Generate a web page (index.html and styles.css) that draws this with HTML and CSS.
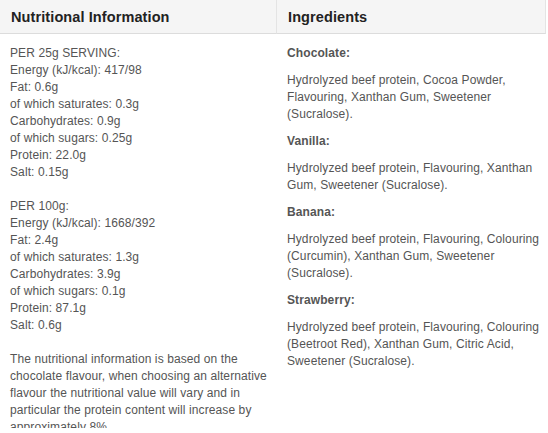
FILE: index.html
```html
<!DOCTYPE html>
<html>
<head>
<meta charset="utf-8">
<link rel="stylesheet" href="styles.css">
</head>
<body>
<div class="wrap">
  <section class="col col-left">
    <h2 class="head">Nutritional Information</h2>
    <div class="body">
      <p>PER 25g SERVING:<br>Energy (kJ/kcal): 417/98<br>Fat: 0.6g<br>of which saturates: 0.3g<br>Carbohydrates: 0.9g<br>of which sugars: 0.25g<br>Protein: 22.0g<br>Salt: 0.15g</p>
      <p>PER 100g:<br>Energy (kJ/kcal): 1668/392<br>Fat: 2.4g<br>of which saturates: 1.3g<br>Carbohydrates: 3.9g<br>of which sugars: 0.1g<br>Protein: 87.1g<br>Salt: 0.6g</p>
      <p>The nutritional information is based on the chocolate flavour, when choosing an alternative flavour the nutritional value will vary and in particular the protein content will increase by approximately 8%.</p>
    </div>
  </section>
  <section class="col col-right">
    <h2 class="head">Ingredients</h2>
    <div class="body">
      <h3 class="flav">Chocolate:</h3>
      <p class="ing">Hydrolyzed beef protein, Cocoa Powder, Flavouring, Xanthan Gum, Sweetener (Sucralose).</p>
      <h3 class="flav">Vanilla:</h3>
      <p class="ing">Hydrolyzed beef protein, Flavouring, Xanthan Gum, Sweetener (Sucralose).</p>
      <h3 class="flav">Banana:</h3>
      <p class="ing">Hydrolyzed beef protein, Flavouring, Colouring (Curcumin), Xanthan Gum, Sweetener (Sucralose).</p>
      <h3 class="flav">Strawberry:</h3>
      <p class="ing">Hydrolyzed beef protein, Flavouring, Colouring (Beetroot Red), Xanthan Gum, Citric Acid, Sweetener (Sucralose).</p>
    </div>
  </section>
</div>
</body>
</html>
```
FILE: styles.css
```css
html, body {
  margin: 0;
  padding: 0;
  background: #fff;
}
body {
  font-family: "Liberation Sans", Arial, sans-serif;
  font-size: 12px;
  line-height: 17px;
  color: #555;
  letter-spacing: 0.1px;
  overflow: hidden;
}
.wrap {
  display: grid;
  grid-template-columns: 277px 269px;
  width: 546px;
  height: 428px;
  overflow: hidden;
}
.head {
  margin: 0;
  height: 33px;
  line-height: 34px;
  padding: 0 11px;
  font-size: 14.5px;
  font-weight: bold;
  letter-spacing: 0.1px;
  color: #222;
  background: #f5f5f5;
  border-bottom: 1px solid #dcdcdc;
  border-right: 1px solid #e4e4e4;
}
.body {
  padding: 11px 10px 0 10px;
}
.col-right .body {
  padding-right: 4px;
}
.body p {
  margin: 0 0 17px 0;
}
.flav {
  margin: 0 0 10px 0;
  font-size: 12px;
  line-height: 17px;
  font-weight: bold;
  color: #555;
}
.body .ing {
  margin: 0 0 10px 0;
}
```
